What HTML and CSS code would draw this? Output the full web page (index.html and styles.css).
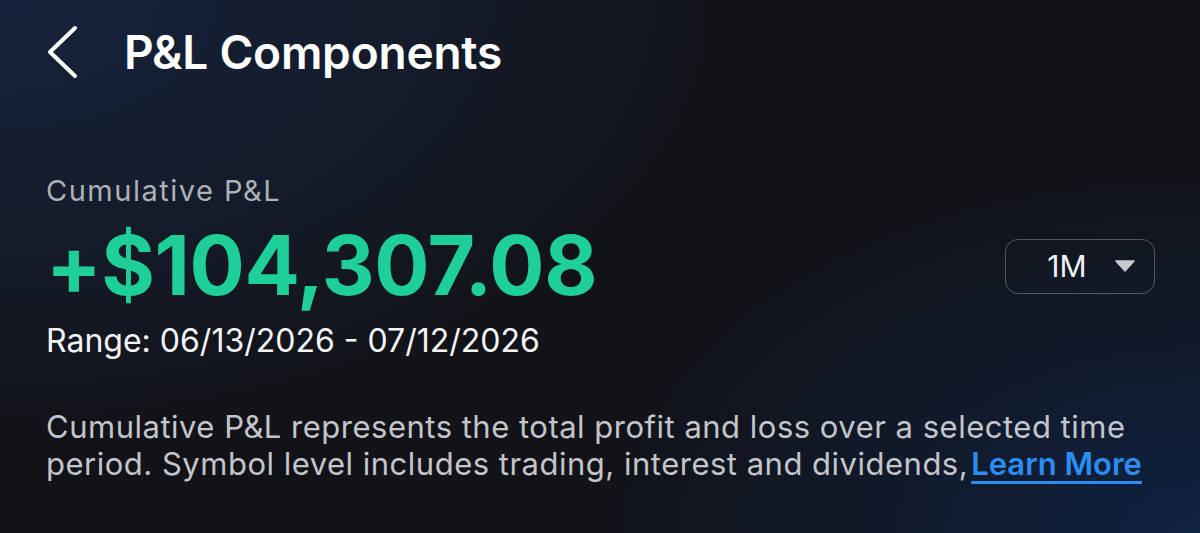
FILE: index.html
```html
<!DOCTYPE html>
<html lang="en">
<head>
    <meta charset="UTF-8">
    <meta name="viewport" content="width=device-width, initial-scale=1.0">
    <title>P&amp;L Components</title>
    <link rel="stylesheet" href="styles.css">
</head>
<body>
    <div class="screen">
        <header class="top-bar">
            <button class="back-btn" aria-label="Back">
                <svg width="36" height="56" viewBox="0 0 36 56">
                    <polyline points="29,4 4,28 29,52" fill="none" stroke="#ffffff" stroke-width="4" stroke-linecap="round" stroke-linejoin="round"/>
                </svg>
            </button>
            <h1>P&amp;L Components</h1>
        </header>

        <section class="pnl">
            <div class="label">Cumulative P&amp;L</div>
            <div class="amount-row">
                <div class="amount">+$104,307.08</div>
                <button class="period-select">
                    <span>1M</span>
                    <svg width="20" height="12" viewBox="0 0 20 12">
                        <polygon points="1,1 19,1 10,11" fill="#c9cacd" stroke="#c9cacd" stroke-width="1.5" stroke-linejoin="round"/>
                    </svg>
                </button>
            </div>
            <div class="range">Range: 06/13/2026 - 07/12/2026</div>
            <p class="note">
                Cumulative P&amp;L represents the total profit and loss over a selected time
                period. Symbol level includes trading, interest and dividends,<a href="#">Learn More</a>
            </p>
        </section>
    </div>
</body>
</html>
```

FILE: styles.css
```css
html, body {
    height: 100%;
}

body {
    margin: 0;
    font-family: Inter, "Noto Sans", sans-serif;
    color: #ffffff;
    background-color: #121318;
    background-image:
        radial-gradient(ellipse 750px 440px at 0% 0%, #16233c 0%, rgba(22, 35, 60, 0.6) 45%, rgba(18, 19, 24, 0) 100%),
        radial-gradient(ellipse 620px 380px at 100% 100%, #0f2242 0%, rgba(15, 34, 66, 0.5) 45%, rgba(18, 19, 24, 0) 100%);
}

.screen {
    padding: 0 46px;
}

.top-bar {
    display: flex;
    align-items: center;
    gap: 42px;
    height: 104px;
}

.back-btn {
    background: none;
    border: none;
    padding: 0;
    display: flex;
    cursor: pointer;
}

.top-bar h1 {
    margin: 0;
    font-size: 46px;
    font-weight: 600;
    letter-spacing: -0.2px;
}

.pnl {
    padding-top: 70px;
}

.label {
    font-size: 29px;
    color: #aeb0b5;
    line-height: 34px;
    letter-spacing: 1.5px;
}

.amount-row {
    display: flex;
    align-items: center;
    justify-content: space-between;
    height: 116px;
}

.amount {
    font-size: 82px;
    font-weight: 700;
    color: #1fcf98;
    line-height: 116px;
    letter-spacing: -0.4px;
}

.period-select {
    display: flex;
    align-items: center;
    justify-content: center;
    gap: 28px;
    width: 150px;
    height: 55px;
    margin-right: -1px;
    padding: 0 0 0 22px;
    background: transparent;
    border: 1.5px solid #55585f;
    border-radius: 13px;
    color: #f2f2f4;
    font-family: Inter, sans-serif;
    font-size: 30px;
}

.range {
    font-size: 32px;
    line-height: 33px;
    color: #f4f4f6;
}

.note {
    margin: 51px 0 0;
    font-size: 31px;
    line-height: 37px;
    letter-spacing: 0.5px;
    color: #c3c5ca;
}

.note a {
    margin-left: 3px;
    color: #2b8cf2;
    font-weight: 600;
    letter-spacing: 0;
    text-decoration: underline;
    text-underline-offset: 6px;
}
```
